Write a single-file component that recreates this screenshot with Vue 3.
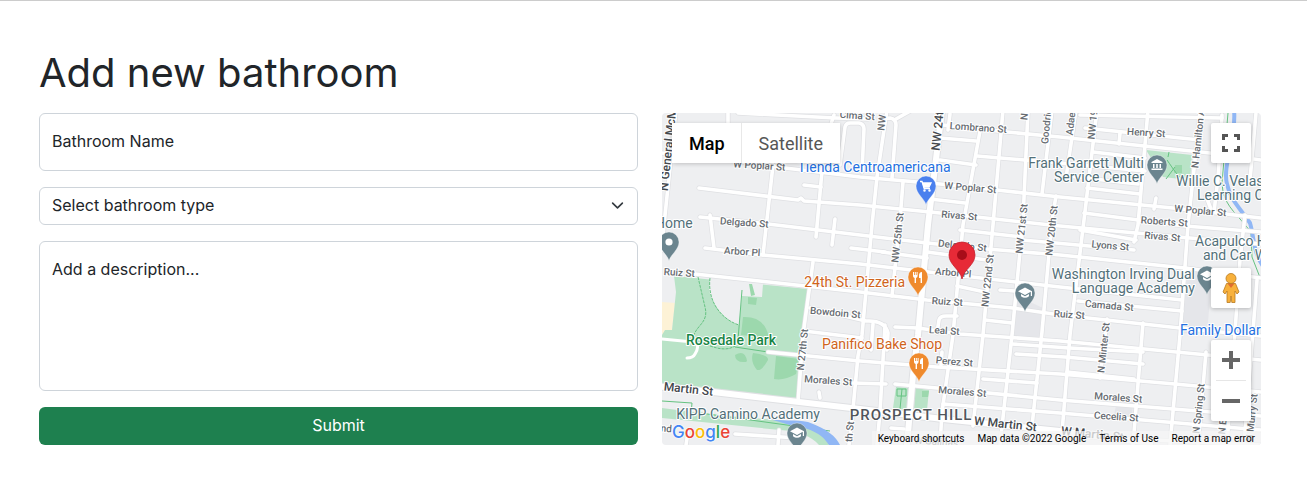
<script setup>
import { ref } from 'vue'

const name = ref('')
const kind = ref('')
const description = ref('')

// Street geometry in map canvas units
const minorRoads = [
  'M676 110L664 225L662 250', 'M728 110V126', 'M773 165L763 255', 'M823 160L816 237', 'M710 215L714 248',
  'M738 113L836 118L868 119', 'M840 165L845 127Q846 123 850 123L859 123Q864 124 864 129L862 172',
  'M887 110L877 177L872 225L862 335L858 356L853 409L849 445', 'M880 119L890 118Q896 119 896 125L892 178', 'M896 119L912 110',
  'M903 182L900 220L892 296', 'M885 325L880 412L877 445', 'M980 131L963 225L953 335L942 412L940 445',
  'M1003 110L993 225L983 335L973 426', 'M1028 110L1023 220L1012 335L1000 445', 'M1052 110L1042 194',
  'M1056 196L1052 220L1042 332L1030 445', 'M1076 110L1066 178', 'M1097 110L1084 220L1070 335L1061 445',
  'M1148 110L1138 225L1134 242', 'M1200 113L1188 225L1180 335L1170 445', 'M1222 115L1218 178L1214 212',
  'M1256 113L1250 180', 'M1245 215L1240 260L1235 332L1227 445', 'M1206 352L1198 445', 'M1257 280L1244 445',
  'M1107 319L1100 378', 'M1143 323L1133 445', 'M813 262L803 335L798 402', 'M834 115L831 124',
  'M662 153L735 161L785 168L860 177L940 184L997 190L1060 197L1173 208L1261 218',
  'M699 188L798 200L801 198L804 201L860 205L940 213L1060 226L1190 238L1261 244',
  'M700 217L768 224L860 235L927 243L987 249L1060 255L1185 268L1261 278',
  'M705 248L763 255L860 264L937 273L1060 287L1182 300',
  'M695 274L860 292L927 300L1013 308L1060 315L1180 328L1261 336', 'M804 331L862 338',
  'M895 327L918 328L960 334L1060 341L1261 360', 'M810 308L866 321Q885 320 888 333L887 350',
  'M768 352L860 361L937 367L1060 374L1175 384L1261 392', 'M895 384L937 388L1060 400L1261 416',
  'M943 404L1060 413L1261 430', 'M943 125L1007 132L1060 137L1210 153L1261 160', 'M940 138L976 141',
  'M940 160L976 165', 'M977 156L1060 163L1145 171', 'M930 199L965 203', 'M1080 115L1222 118',
  'M1085 128L1200 140', 'M1093 152L1145 158', 'M1068 176L1138 184', 'M1087 188L1140 194', 'M1084 213L1185 226L1261 232',
  'M1080 230L1136 240', 'M1022 240L1134 250', 'M960 230L1022 237', 'M927 252L987 260', 'M957 286L985 292', 'M882 252L927 258',
  'M937 333L939 320Q940 316 946 316L957 316', 'M985 320L1012 323', 'M1000 290L1015 291', 'M1078 301L1182 311',
  'M1016 354L1065 357L1143 364', 'M1012 344L1069 348L1143 352', 'M983 379L1037 383', 'M1067 372L1134 379',
  'M853 383L886 384', 'M819 392L820 398', 'M891 428L904 429', 'M735 434L798 438', 'M779 430L778 445', 'M688 432L686 445',
  'M804 185L821 187', 'M851 248L885 252', 'M873 324L871 350', 'M942 352L941 365', 'M835 219L832 245',
  'M1206 196L1212 212', 'M1156 198L1154 209', 'M1120 133L1119 144', 'M950 114L948 130', 'M1068 436L1261 445'
]
const majorRoads = ['M942 110L928 225L918 335L913 375L907 445', 'M655 386L713 392L860 409L943 419L1060 431L1150 443']

const streets = [
  ['N General McM', 672, 150, -84, 1], ['Cima St', 857, 119, 4], ['NW', 885, 123, -84], ['NW 24th', 942, 128, -84, 1],
  ['Lombrano St', 978, 131, 4], ['Goodrich', 1050, 124, -84], ['Nic', 1028, 113, -84], ['Adae', 1074, 124, -84],
  ['NW 19', 1096, 125, -84], ['Henry St', 1146, 136, 4], ['N Hamilton Ave', 1202, 134, -84], ['W Poplar St', 759, 169, 4],
  ['W Poplar St', 970, 191, 5], ['W Poplar St', 1200, 214, 5], ['Rivas St', 959, 219, 5], ['Roberts St', 1164, 225, 4],
  ['Rivas St', 1162, 240, 5], ['Delgado St', 744, 226, 4], ['Arbor Pl', 742, 255, 4], ['Ruiz St', 679, 276, 4],
  ['Delgado St', 962, 249, 6], ['Arbor Pl', 953, 276, 5], ['Lyons St', 1110, 249, 5], ['Ruiz St', 947, 305, 4],
  ['Ruiz St', 1069, 318, 4], ['Camada St', 1109, 309, 5], ['Leal St', 944, 334, 4], ['Bowdoin St', 835, 316, 5],
  ['Perez St', 954, 365, 5], ['Morales St', 828, 384, 4], ['Morales St', 962, 395, 5], ['Morales St', 1118, 401, 4],
  ['Cecelia St', 1116, 420, 4], ['NW 25th St', 901, 238, -84], ['NW 21st St', 1025, 229, -84], ['NW 20th St', 1055, 231, -84],
  ['NW 22nd St', 991, 281, -84], ['N 27th St', 806, 350, -84], ['N Minter St', 1107, 348, -84], ['N Spring St', 1202, 409, -84],
  ['N El', 1226, 426, -84], ['N Murry St', 1255, 418, -84], ['W Martin St', 1005, 428, 6, 1], ['W Martin St', 1092, 438, 6, 1],
  ['Martin St', 688, 393, 6, 1], ['W Salinas', 936, 445, 4], ['th St', 853, 432, -84], ['nd', 666, 432, 4]
]
const places = [
  ['Tienda Centroamericana', 874, 172, 'shop'], ['Frank Garrett Multi', 1144, 168, 'civic', 'end'],
  ['Service Center', 1144, 182, 'civic', 'end'], ['Willie C. Velas', 1176, 186, 'civic', 'start'],
  ['Learning C', 1197, 200, 'civic', 'start'], ['Home', 655, 228, 'civic', 'start'],
  ['Acapulco H', 1195, 246, 'civic', 'start'], ['and Car W', 1203, 260, 'civic', 'start'],
  ['Washington Irving Dual', 1195, 279, 'civic', 'end'], ['Language Academy', 1195, 293, 'civic', 'end'],
  ['Family Dollar', 1180, 335, 'shop', 'start'], ['24th St. Pizzeria', 905, 287, 'food', 'end'],
  ['Panifico Bake Shop', 882, 349, 'food'], ['KIPP Camino Academy', 748, 419, 'civic'], ['Rosedale Park', 731, 345, 'park']
]
const pins = [
  [926, 186, '#4a80ee', 'cart'], [1157, 165, '#6b858f', 'museum'], [669, 242, '#6b858f', 'dot'],
  [918, 277, '#ef8a2d', 'fork'], [1025, 293, '#6b858f', 'cap'], [1207, 276, '#6b858f', 'cap'],
  [919, 363, '#ef8a2d', 'fork'], [797, 433, '#6b858f', 'cap']
]
</script>

<template>
  <main class="page">
    <h1>Add new bathroom</h1>
    <div class="columns">
      <form class="form" @submit.prevent>
        <div class="field">
          <input id="name" v-model="name" class="control name" type="text" />
          <label v-show="!name" for="name">Bathroom Name</label>
        </div>
        <div class="field">
          <select v-model="kind" class="control kind" aria-label="Bathroom type">
            <option value="">Select bathroom type</option>
            <option value="public">Public</option>
            <option value="private">Private</option>
          </select>
          <svg class="chevron" viewBox="0 0 16 16" aria-hidden="true"><path d="m2 5 6 6 6-6" /></svg>
        </div>
        <div class="field">
          <textarea id="description" v-model="description" class="control description"></textarea>
          <label v-show="!description" for="description">Add a description...</label>
        </div>
        <button class="submit" type="submit">Submit</button>
      </form>

      <section class="map" aria-label="Map">
        <svg class="canvas" viewBox="662 113 599 332" preserveAspectRatio="xMidYMid slice">
          <rect x="0" y="0" width="2000" height="800" fill="#eeeff1" />
          <path fill="#e5e6ea" d="M1017 296L1043 308L1040 338L1013 336ZM1188 268L1212 272L1207 335L1181 333ZM1117 401L1133 402L1132 417L1114 415ZM785 341L801 343L800 353L785 352Z" />
          <path fill="#fdf2d6" d="M662 302L675 303L672 330L662 334Z" />
          <path fill="#b9e3c7" d="M674 276L808 289L797 398L662 388V335L665 330L672 330L676 292ZM1146 150L1192 155L1190 180L1163 177ZM896 387L909 388L907 410L893 408ZM915 388L929 390L927 410L914 408ZM662 408L700 413L787 421C812 425 824 434 829 445L819 445C811 436 798 431 780 430L662 418Z" />
          <path fill="#eeeff1" d="M710 278L763 284L762 297L742 296L739 325C723 320 712 303 709 290Z" />
          <path fill="#9cd8ad" d="M749 284L752 284L755 295L751 296ZM748 297L757 298L756 305L748 304ZM743 317Q765 316 769 338L741 335ZM735 355Q745 349 747 361L746 362Q735 363 735 355ZM753 353Q769 355 768 360Q762 371 757 370Q750 362 753 353ZM776 356L799 359L796 374Q784 381 774 379ZM1175 165H1182V173H1174ZM922 391L929 391L928 397L922 397Z" />
          <g fill="none" stroke="#65c281" stroke-width="1">
            <path stroke-dasharray="3 1" d="M698 277L705 307C709 322 697 325 694 335M710 278C707 303 723 320 739 325M695 340C710 346 724 353 735 346" />
            <path d="M742 290L738 340M735 347L768 352M662 401L692 403L691 414M700 413L830 431M1167 160C1174 170 1178 177 1184 180M1175 167L1166 179M1169 152L1168 157M897 389H906V396H897ZM902 389L900 409M1228 113L1222 183C1223 204 1234 211 1246 226M1246 226L1251 232L1252 257L1261 280" />
          </g>
          <path d="M1234 110C1237 137 1222 166 1227 184C1230 199 1239 207 1250 223C1254 236 1253 252 1263 266" stroke="#90b7f5" stroke-width="4" fill="none" />
          <path d="M766 418C782 422 796 419 808 422C828 429 836 437 840 445L829 445C823 435 812 428 790 425Z" fill="#90b7f5" />
          <g fill="none" stroke-linejoin="round" stroke-linecap="round">
            <g stroke="#dfe0e3" stroke-width="5"><path v-for="(d, i) in minorRoads" :key="i" :d="d" /></g>
            <g stroke="#dfe0e3" stroke-width="8"><path v-for="(d, i) in majorRoads" :key="i" :d="d" /></g>
            <g stroke="#fff" stroke-width="3.6"><path v-for="(d, i) in minorRoads" :key="i" :d="d" /></g>
            <g stroke="#fff" stroke-width="6"><path v-for="(d, i) in majorRoads" :key="i" :d="d" /></g>
            <path stroke="#fff" stroke-width="3" d="M662 339L693 342Q701 344 695 354Q693 358 687 358" />
          </g>
          <text v-for="(s, i) in streets" :key="'s' + i" :class="['street', { major: s[4] }]" :transform="`translate(${s[1]} ${s[2]}) rotate(${s[3]})`">{{ s[0] }}</text>
          <text class="district" x="911" y="420">PROSPECT HILL</text>
          <text v-for="(p, i) in places" :key="'p' + i" :class="['place', p[3]]" :x="p[1]" :y="p[2]" :text-anchor="p[4] || 'middle'">{{ p[0] }}</text>
          <g v-for="(p, i) in pins" :key="'m' + i" :transform="`translate(${p[0]} ${p[1]})`">
            <path :fill="p[2]" stroke="#fff" stroke-opacity=".6" stroke-width=".6" d="M0 19C-1 13-10 8-10 0A10 10 0 0 1 10 0C10 8 1 13 0 19Z" />
            <g v-if="p[3] === 'cart'" fill="none" stroke="#fff" stroke-width="1.3"><path fill="#fff" d="M-3-3H5L3 1H-2Z" /><path d="M-6-4.5H-4L-1.8 2.5H4" /><circle cx="-1.5" cy="4.5" r=".6" /><circle cx="3.5" cy="4.5" r=".6" /></g>
            <path v-else-if="p[3] === 'museum'" fill="#fff" d="M0-6L5.5-3V-2H-5.5V-3ZM-4-1H-2.5V3H-4ZM-.8-1H.8V3H-.8ZM2.5-1H4V3H2.5ZM-5.5 3.5H5.5V5H-5.5Z" />
            <circle v-else-if="p[3] === 'dot'" r="3.6" fill="#fff" />
            <path v-else-if="p[3] === 'fork'" fill="#fff" d="M-5-5H-4V-2H-3.2V-5H-2.2V-2H-1.4V-5H-.4V-1Q-.5 .5-2 1V6H-3.4V1Q-5 .5-5-1ZM4-5V6H2.6V1H1V-2Q1.3-5 4-5Z" />
            <path v-else fill="#fff" d="M0-5.5L7-1.8V3H5.8V-1.2L0 2L-7-1.8ZM-4 1L0 3.2L4 1V3.2Q0 6.5-4 3.2Z" />
          </g>
          <path d="M962 279C960 269 949 265 949 255A13 13 0 0 1 975 255C975 265 964 269 962 279Z" fill="#e72a37" stroke="#c5222d" stroke-width=".8" />
          <circle cx="962" cy="255" r="5" fill="#a80d19" />
        </svg>

        <div class="types">
          <button type="button" class="active">Map</button>
          <button type="button">Satellite</button>
        </div>
        <button type="button" class="tool fullscreen" aria-label="Toggle fullscreen">
          <svg width="18" height="18" viewBox="0 0 18 18"><path d="M1.5 6V1.5H6M12 1.5H16.5V6M16.5 12V16.5H12M6 16.5H1.5V12" fill="none" stroke="#555" stroke-width="3" /></svg>
        </button>
        <div class="side">
          <button type="button" class="tool" aria-label="Street View">
            <svg width="18" height="32" viewBox="0 0 18 32">
              <path d="M4.5 11.5H13.5L17 20L15 22L13 19V30.5H9.8L9 24L8.2 30.5H5V19L3 22L1 20Z" fill="#f8b13c" stroke="#b77a21" stroke-width=".8" />
              <path d="M5.5 11.5H12.5L9 16Z" fill="#e06d32" /><circle cx="9" cy="6.5" r="5" fill="#f8b13c" stroke="#b77a21" stroke-width=".8" />
            </svg>
          </button>
          <div class="zoom">
            <button type="button" aria-label="Zoom in"><svg width="18" height="18" viewBox="0 0 18 18"><path d="M0 9H18M9 0V18" stroke="#666" stroke-width="4" /></svg></button>
            <button type="button" aria-label="Zoom out"><svg width="18" height="18" viewBox="0 0 18 18"><path d="M0 9H18" stroke="#666" stroke-width="4" /></svg></button>
          </div>
        </div>
        <a class="logo" href="#" aria-label="Google"><span class="b">G</span><span class="r">o</span><span class="y">o</span><span class="b">g</span><span class="g">l</span><span class="r">e</span></a>
        <div class="legal">
          <button type="button">Keyboard shortcuts</button><span>Map data ©2022 Google</span><a href="#">Terms of Use</a><a href="#">Report a map error</a>
        </div>
      </section>
    </div>
  </main>
</template>

<style>
body { margin: 0; background: #fff; }
</style>

<style scoped>
.page { box-sizing: border-box; border-top: 1px solid #ccc; padding: 48px 46px 48px 39px; color: #212529; font-family: Inter, "Liberation Sans", sans-serif; font-size: 16px; line-height: 24px; }
* { box-sizing: border-box; }
h1 { margin: 0 0 16px; font-size: 40px; line-height: 48px; font-weight: 400; }
.columns { display: grid; grid-template-columns: minmax(0, 1fr) minmax(0, 1fr); gap: 24px; }
.form { display: flex; flex-direction: column; gap: 16px; }
.field { position: relative; display: flex; }
.control { width: 100%; margin: 0; border: 1px solid #ced4da; border-radius: 6px; background: #fff; color: inherit; font: inherit; }
.name { height: 58px; padding: 16px 12px; }
.kind { appearance: none; height: 38px; padding: 5px 36px 7px 12px; }
.description { height: 150px; padding: 16px 12px; resize: none; }
label { position: absolute; top: 16px; left: 13px; cursor: text; }
.chevron { position: absolute; right: 14px; top: 12px; width: 13px; height: 13px; fill: none; stroke: #343a40; stroke-width: 2; stroke-linecap: round; stroke-linejoin: round; pointer-events: none; }
.submit { border: 0; border-radius: 6px; padding: 6px 12px 8px; background: #1e804f; color: #fff; font: inherit; }
.map { position: relative; overflow: hidden; min-height: 332px; font-family: Roboto, sans-serif; border-radius: 4px; }
.map button { border: 0; padding: 0; background: #fff; font-family: inherit; }
.canvas { position: absolute; inset: 0; width: 100%; height: 100%; }
.canvas text { paint-order: stroke; stroke: #fff; stroke-width: 2px; stroke-linejoin: round; }
.street { font-size: 10px; font-weight: 500; fill: #666b71; text-anchor: middle; }
.street.major { font-size: 12px; fill: #44484d; }
.place { font-size: 14px; }
.civic { fill: #527079; }
.shop { fill: #2470df; }
.food { fill: #d0641c; }
.park { fill: #198546; font-weight: 500; }
.district { font-size: 15px; font-weight: 500; fill: #50555b; letter-spacing: 1px; text-anchor: middle; }
.types { position: absolute; top: 10px; left: 10px; display: flex; border-radius: 2px; box-shadow: 0 1px 4px rgba(0, 0, 0, .2); }
.types button { height: 40px; padding: 0 17px; font-size: 18px; color: #565656; }
.map .types .active { padding-right: 16px; color: #000; font-weight: 500; border-right: 1px solid #e8e8e8; }
.map .types button { padding-left: 17px; padding-right: 17px; }
.map .types .active { padding-right: 16px; }
.tool, .zoom { display: grid; place-items: center; width: 40px; border-radius: 2px; background: #fff; box-shadow: 0 1px 4px rgba(0, 0, 0, .25); }
.tool { height: 40px; }
.fullscreen { position: absolute; top: 10px; right: 10px; }
.side { position: absolute; right: 10px; bottom: 24px; display: grid; gap: 32px; }
.zoom button { display: grid; place-items: center; width: 30px; height: 40px; }
.map .zoom button + button { height: 41px; border-top: 1px solid #e6e6e6; }
.logo { position: absolute; left: 10px; bottom: 1px; font: 500 17px/24px Inter, sans-serif; text-decoration: none; text-shadow: 0 0 2px #fff, 0 0 2px #fff; }
.b { color: #4285f4; }
.r { color: #ea4335; }
.y { color: #fbbc05; }
.g { color: #34a853; }
.legal { position: absolute; right: 0; bottom: 0; display: flex; gap: 13px; padding: 1px 6px 0; background: rgba(245, 245, 245, .75); font-size: 10px; line-height: 13px; color: #000; white-space: nowrap; }
.map .legal button { background: none; font-size: 10px; line-height: 13px; color: inherit; }
.legal a { color: inherit; text-decoration: none; }
</style>
